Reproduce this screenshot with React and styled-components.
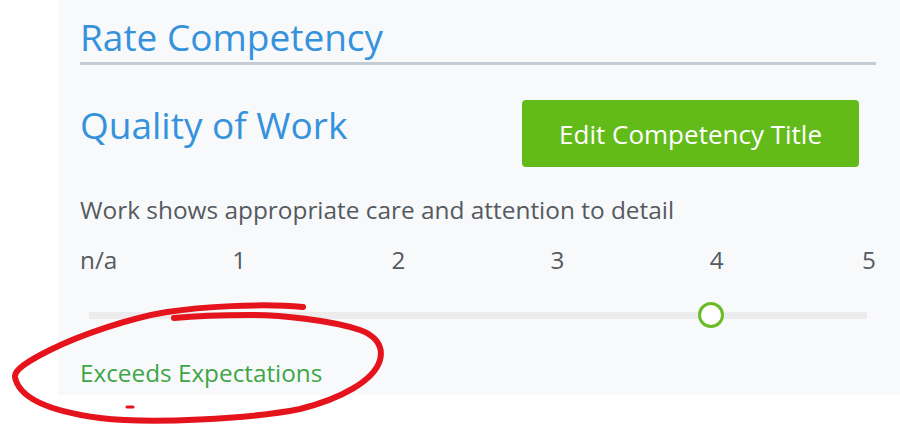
import React from "react";
import styled, { createGlobalStyle } from "styled-components";

const GlobalStyle = createGlobalStyle`
  html, body {
    margin: 0;
    padding: 0;
    background: #ffffff;
    font-family: "Open Sans", "Liberation Sans", sans-serif;
  }
`;

const Page = styled.div`
  position: relative;
  width: 900px;
  height: 424px;
  overflow: hidden;
`;

const Panel = styled.section`
  margin-left: 58px;
  padding: 15px 24px 6px 22px;
  background: #f8f9fb;
`;

const SectionTitle = styled.h1`
  margin: 0;
  padding-bottom: 3px;
  font-size: 37px;
  line-height: 44px;
  font-weight: 400;
  color: #3592dc;
  border-bottom: 3px solid #c4ccd5;
`;

const HeadRow = styled.div`
  display: flex;
  justify-content: space-between;
  align-items: flex-start;
  margin-top: 35px;
`;

const CompetencyTitle = styled.h2`
  margin: 3px 0 0;
  font-size: 37px;
  line-height: 44px;
  font-weight: 400;
  color: #3592dc;
`;

const EditButton = styled.button`
  margin-right: 17px;
  height: 67px;
  padding: 0 37px;
  border: none;
  border-radius: 4px;
  background: #63bb1a;
  color: #ffffff;
  font-family: inherit;
  font-size: 26px;
  cursor: pointer;
`;

const Description = styled.p`
  margin: 27px 0 0;
  font-size: 24.4px;
  line-height: 32px;
  color: #555a60;
`;

const Ticks = styled.div`
  display: flex;
  justify-content: space-between;
  margin-top: 18px;
  font-size: 24.3px;
  line-height: 32px;
  color: #555a60;
`;

const Tick = styled.span`
  display: flex;
  width: 0;
  white-space: nowrap;
  justify-content: ${p => p.$align};
`;

const Slider = styled.div`
  position: relative;
  height: 26px;
  margin: 26px 9px 0;
  display: flex;
  align-items: center;
`;

const Track = styled.div`
  width: 100%;
  height: 7px;
  background: #ececec;
`;

const Thumb = styled.div`
  position: absolute;
  top: 0;
  width: 26px;
  height: 26px;
  box-sizing: border-box;
  border: 3px solid #6abc26;
  border-radius: 50%;
  background: #ffffff;
  transform: translateX(-50%);
`;

const Rating = styled.div`
  margin-top: 29px;
  font-size: 24.3px;
  line-height: 32px;
  color: #3ea648;
`;

const Annotation = styled.svg`
  position: absolute;
  left: 0;
  top: 0;
  pointer-events: none;
`;

const labels = ["n/a", "1", "2", "3", "4", "5"];
const value = 4;

const alignFor = i =>
  i === 0 ? "flex-start" : i === labels.length - 1 ? "flex-end" : "center";

export default function App() {
  return (
    <Page>
      <GlobalStyle />
      <Panel>
        <SectionTitle>Rate Competency</SectionTitle>
        <HeadRow>
          <CompetencyTitle>Quality of Work</CompetencyTitle>
          <EditButton>Edit Competency Title</EditButton>
        </HeadRow>
        <Description>Work shows appropriate care and attention to detail</Description>
        <Ticks>
          {labels.map((l, i) => (
            <Tick key={l} $align={alignFor(i)}>{l}</Tick>
          ))}
        </Ticks>
        <Slider>
          <Track />
          <Thumb style={{ left: `${(value / (labels.length - 1)) * 100}%` }} />
        </Slider>
        <Rating>Exceeds Expectations</Rating>
      </Panel>
      <Annotation width="900" height="424" viewBox="0 0 900 424">
        <path
          d="M303 307 C 260 303, 200 307, 167 312 C 130 318, 80 335, 50 350 C 28 361, 14 370, 15 377 C 18 394, 40 410, 100 418 C 150 424, 250 419, 300 409 C 340 399, 374 381, 380 360 C 384 345, 374 335, 360 330 C 330 320, 280 315, 250 315 C 220 315, 195 316, 174 318"
          fill="none"
          stroke="#e5131b"
          strokeWidth="6"
          strokeLinecap="round"
        />
        <path d="M127 407 L133 407" stroke="#e5131b" strokeWidth="3" strokeLinecap="round" />
      </Annotation>
    </Page>
  );
}
